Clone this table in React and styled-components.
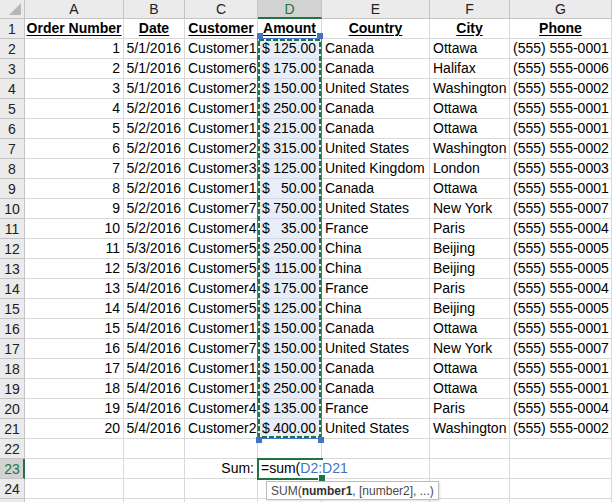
import React from "react";
import styled, { createGlobalStyle, css } from "styled-components";

const GREEN = "#217346";
const BLUE = "#4472c4";
const GRID = "#d9d9d9";
const HEAD_LINE = "#c4c4c4";
const HEAD_BG = "#ebebeb";
const HEAD_ACTIVE = "#d2d2d2";
const SEL_BG = "#e8eef7";

const COLS = [25, 99, 61, 73, 64, 108, 80, 102];
const LETTERS = ["A", "B", "C", "D", "E", "F", "G"];

const Global = createGlobalStyle`
  html, body { margin: 0; padding: 0; background: #fff; overflow: hidden; }
  body { font-family: "Liberation Sans", Arial, sans-serif; }
`;

const Wrap = styled.div`
  position: relative;
  width: 612px;
  height: 502px;
  overflow: hidden;
  background: #fff;
`;

const Sheet = styled.div`
  display: grid;
  grid-template-columns: ${COLS.map((c) => c + "px").join(" ")};
  grid-template-rows: 19px repeat(25, 20px);
  font-size: 14px;
  color: #000;
`;

const Corner = styled.div`
  position: relative;
  box-sizing: border-box;
  background: ${HEAD_BG};
  border-right: 1px solid ${HEAD_LINE};
  border-bottom: 1px solid ${HEAD_LINE};
`;

const CornerTri = styled.svg`
  position: absolute;
  right: 3px;
  bottom: 3px;
`;

const ColHeader = styled.div`
  box-sizing: border-box;
  display: flex;
  align-items: center;
  justify-content: center;
  background: ${(p) => (p.$active ? HEAD_ACTIVE : HEAD_BG)};
  color: ${(p) => (p.$active ? GREEN : "#222")};
  border-right: 1px solid ${HEAD_LINE};
  border-bottom: ${(p) => (p.$active ? `2px solid ${GREEN}` : `1px solid ${HEAD_LINE}`)};
  padding-top: ${(p) => (p.$active ? "1px" : "0")};
  font-size: 14px;
`;

const RowHeader = styled.div`
  box-sizing: border-box;
  display: flex;
  align-items: center;
  justify-content: center;
  background: ${(p) => (p.$active ? HEAD_ACTIVE : HEAD_BG)};
  color: ${(p) => (p.$active ? GREEN : "#222")};
  border-right: ${(p) => (p.$active ? `2px solid ${GREEN}` : `1px solid ${HEAD_LINE}`)};
  border-bottom: 1px solid ${HEAD_LINE};
  padding-left: ${(p) => (p.$active ? "1px" : "0")};
  font-size: 14px;
`;

const Cell = styled.div`
  box-sizing: border-box;
  display: flex;
  align-items: flex-end;
  justify-content: ${(p) =>
    p.$align === "right" ? "flex-end" : p.$align === "center" ? "center" : "flex-start"};
  padding: 0 3px 2px 3px;
  line-height: 16px;
  white-space: nowrap;
  overflow: ${(p) => (p.$overflow ? "visible" : "hidden")};
  border-bottom: 1px solid ${GRID};
  border-right: ${(p) => (p.$noRight ? "none" : `1px solid ${GRID}`)};
  position: relative;
  z-index: ${(p) => (p.$overflow ? 2 : "auto")};
  ${(p) =>
    p.$sel &&
    css`
      background: ${SEL_BG};
      border-bottom-color: #d3dae6;
    `}
`;

const Accounting = styled.div`
  flex: 1;
  display: flex;
  justify-content: space-between;
  padding: 0 2px 0 1px;
`;

const HeadText = styled.span`
  font-weight: bold;
  text-decoration: underline;
  text-underline-offset: 2px;
`;

const FormulaRef = styled.span`
  color: ${BLUE};
`;

const Selection = styled.div`
  position: absolute;
  left: 257px;
  top: 38px;
  width: 65px;
  height: 401px;
  pointer-events: none;
  z-index: 3;
`;

const Handle = styled.div`
  position: absolute;
  width: 6px;
  height: 6px;
  background: ${BLUE};
  left: ${(p) => p.$x}px;
  top: ${(p) => p.$y}px;
`;

const ActiveCell = styled.div`
  position: absolute;
  left: 257px;
  top: 458px;
  width: 66px;
  height: 22px;
  box-sizing: border-box;
  border: 2px solid ${GREEN};
  border-right: none;
  pointer-events: none;
  z-index: 4;
`;

const FillHandle = styled.div`
  position: absolute;
  right: -3px;
  bottom: -4px;
  width: 6px;
  height: 6px;
  background: ${GREEN};
  border: 1px solid #fff;
`;

const Tooltip = styled.div`
  position: absolute;
  left: 266px;
  top: 481px;
  height: 19px;
  box-sizing: border-box;
  padding: 0 4px;
  display: flex;
  align-items: center;
  background: #fff;
  border: 1px solid #bdbdbd;
  box-shadow: 1px 1px 2px rgba(0, 0, 0, 0.12);
  color: #4a4a4a;
  font-size: 12px;
  white-space: nowrap;
  z-index: 5;
`;

const Bold = styled.b`
  font-weight: bold;
  color: #333;
`;

const headers = ["Order Number", "Date", "Customer", "Amount", "Country", "City", "Phone"];

const data = [
  [1, "5/1/2016", "Customer1", "125.00", "Canada", "Ottawa", "0001"],
  [2, "5/1/2016", "Customer6", "175.00", "Canada", "Halifax", "0006"],
  [3, "5/1/2016", "Customer2", "150.00", "United States", "Washington", "0002"],
  [4, "5/2/2016", "Customer1", "250.00", "Canada", "Ottawa", "0001"],
  [5, "5/2/2016", "Customer1", "215.00", "Canada", "Ottawa", "0001"],
  [6, "5/2/2016", "Customer2", "315.00", "United States", "Washington", "0002"],
  [7, "5/2/2016", "Customer3", "125.00", "United Kingdom", "London", "0003"],
  [8, "5/2/2016", "Customer1", "50.00", "Canada", "Ottawa", "0001"],
  [9, "5/2/2016", "Customer7", "750.00", "United States", "New York", "0007"],
  [10, "5/2/2016", "Customer4", "35.00", "France", "Paris", "0004"],
  [11, "5/3/2016", "Customer5", "250.00", "China", "Beijing", "0005"],
  [12, "5/3/2016", "Customer5", "115.00", "China", "Beijing", "0005"],
  [13, "5/4/2016", "Customer4", "175.00", "France", "Paris", "0004"],
  [14, "5/4/2016", "Customer5", "125.00", "China", "Beijing", "0005"],
  [15, "5/4/2016", "Customer1", "150.00", "Canada", "Ottawa", "0001"],
  [16, "5/4/2016", "Customer7", "150.00", "United States", "New York", "0007"],
  [17, "5/4/2016", "Customer1", "150.00", "Canada", "Ottawa", "0001"],
  [18, "5/4/2016", "Customer1", "250.00", "Canada", "Ottawa", "0001"],
  [19, "5/4/2016", "Customer4", "135.00", "France", "Paris", "0004"],
  [20, "5/4/2016", "Customer2", "400.00", "United States", "Washington", "0002"],
];

function DataRow({ rowNum, r }) {
  return (
    <>
      <RowHeader>{rowNum}</RowHeader>
      <Cell $align="right">{r[0]}</Cell>
      <Cell $align="right">{r[1]}</Cell>
      <Cell>{r[2]}</Cell>
      <Cell $sel>
        <Accounting>
          <span>$</span>
          <span>{r[3]}</span>
        </Accounting>
      </Cell>
      <Cell>{r[4]}</Cell>
      <Cell>{r[5]}</Cell>
      <Cell>(555) 555-{r[6]}</Cell>
    </>
  );
}

function EmptyRow({ rowNum }) {
  return (
    <>
      <RowHeader>{rowNum}</RowHeader>
      {LETTERS.map((l) => (
        <Cell key={l} />
      ))}
    </>
  );
}

export default function App() {
  return (
    <Wrap>
      <Global />
      <Sheet>
        <Corner>
          <CornerTri width="12" height="12" viewBox="0 0 12 12">
            <polygon points="12,0 12,12 0,12" fill="#b7b7b7" />
          </CornerTri>
        </Corner>
        {LETTERS.map((l) => (
          <ColHeader key={l} $active={l === "D"}>
            {l}
          </ColHeader>
        ))}

        <RowHeader>1</RowHeader>
        {headers.map((h) => (
          <Cell key={h} $align="center">
            <HeadText>{h}</HeadText>
          </Cell>
        ))}

        {data.map((r, i) => (
          <DataRow key={i} rowNum={i + 2} r={r} />
        ))}

        <EmptyRow rowNum={22} />

        <RowHeader $active>23</RowHeader>
        <Cell />
        <Cell />
        <Cell $align="right">Sum:</Cell>
        <Cell $noRight $overflow>
          =sum(<FormulaRef>D2:D21</FormulaRef>
        </Cell>
        <Cell />
        <Cell />
        <Cell />

        <EmptyRow rowNum={24} />
        <EmptyRow rowNum="" />
      </Sheet>

      <Selection>
        <svg width="65" height="401" viewBox="0 0 65 401">
          <rect x="0.5" y="0.5" width="64" height="400" fill="none" stroke={BLUE} strokeWidth="1" />
          <rect
            x="2"
            y="2"
            width="61"
            height="397"
            fill="none"
            stroke={GREEN}
            strokeWidth="2"
            strokeDasharray="5 2"
          />
        </svg>
        <Handle $x={0} $y={-5} />
        <Handle $x={60} $y={-5} />
        <Handle $x={-1} $y={399} />
        <Handle $x={61} $y={399} />
      </Selection>

      <ActiveCell>
        <FillHandle />
      </ActiveCell>

      <Tooltip>
        SUM(<Bold>number1</Bold>, [number2], ...)
      </Tooltip>
    </Wrap>
  );
}
